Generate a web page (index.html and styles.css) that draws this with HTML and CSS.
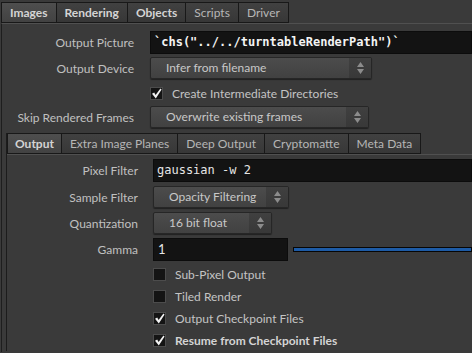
FILE: index.html
```html
<!DOCTYPE html>
<html>
<head>
<title>Render Parameters</title>
<link rel="stylesheet" href="styles.css">
</head>
<body>
<div class="tabs">
<div class="tab active bold">Images</div>
<div class="tab bold">Rendering</div>
<div class="tab bold">Objects</div>
<div class="tab">Scripts</div>
<div class="tab">Driver</div>
</div>
<div class="panel">
<div class="row tall">
<label class="lbl">Output Picture</label>
<div class="field mono strong">`chs("../../turntableRenderPath")`</div>
</div>
<div class="row">
<label class="lbl">Output Device</label>
<div class="menu w222"><span class="menu_text">Infer from filename</span><span class="menu_arrow"><svg width="7" height="12" viewBox="0 0 7 12"><path d="M0 5 L3.5 0 L7 5 Z M0 7 L7 7 L3.5 12 Z" fill="#8c8c8c"/></svg></span></div>
</div>
<div class="row check_row">
<span class="lbl"></span>
<span class="box"><svg width="11" height="11" viewBox="0 0 11 11"><path d="M1 5.8 L3.2 4.6 L4.6 7 L9.4 0.6 L10.6 1.6 L4.8 10.4 Z" fill="#f2f2f2"/></svg></span>
<span class="check_text">Create Intermediate Directories</span>
</div>
<div class="row skip_row">
<label class="lbl">Skip Rendered Frames</label>
<div class="menu w219"><span class="menu_text">Overwrite existing frames</span><span class="menu_arrow"><svg width="7" height="12" viewBox="0 0 7 12"><path d="M0 5 L3.5 0 L7 5 Z M0 7 L7 7 L3.5 12 Z" fill="#8c8c8c"/></svg></span></div>
</div>

<div class="subwrap">
<div class="tabs sub">
<div class="tab active bold">Output</div>
<div class="tab">Extra Image Planes</div>
<div class="tab">Deep Output</div>
<div class="tab">Cryptomatte</div>
<div class="tab">Meta Data</div>
</div>
<div class="subpanel">
<div class="row tall">
<label class="lbl">Pixel Filter</label>
<div class="field mono">gaussian -w 2</div>
</div>
<div class="row">
<label class="lbl">Sample Filter</label>
<div class="menu w136"><span class="menu_text">Opacity Filtering</span><span class="menu_arrow"><svg width="7" height="12" viewBox="0 0 7 12"><path d="M0 5 L3.5 0 L7 5 Z M0 7 L7 7 L3.5 12 Z" fill="#8c8c8c"/></svg></span></div>
</div>
<div class="row">
<label class="lbl">Quantization</label>
<div class="menu w119"><span class="menu_text">16 bit float</span><span class="menu_arrow"><svg width="7" height="12" viewBox="0 0 7 12"><path d="M0 5 L3.5 0 L7 5 Z M0 7 L7 7 L3.5 12 Z" fill="#8c8c8c"/></svg></span></div>
</div>
<div class="row tall">
<label class="lbl">Gamma</label>
<div class="field w135">1</div>
<div class="slider"></div>
</div>
<div class="row check_row first_check">
<span class="lbl"></span>
<span class="box"></span>
<span class="check_text">Sub-Pixel Output</span>
</div>
<div class="row check_row">
<span class="lbl"></span>
<span class="box"></span>
<span class="check_text">Tiled Render</span>
</div>
<div class="row check_row">
<span class="lbl"></span>
<span class="box"><svg width="11" height="11" viewBox="0 0 11 11"><path d="M1 5.8 L3.2 4.6 L4.6 7 L9.4 0.6 L10.6 1.6 L4.8 10.4 Z" fill="#f2f2f2"/></svg></span>
<span class="check_text">Output Checkpoint Files</span>
</div>
<div class="row check_row">
<span class="lbl"></span>
<span class="box"><svg width="11" height="11" viewBox="0 0 11 11"><path d="M1 5.8 L3.2 4.6 L4.6 7 L9.4 0.6 L10.6 1.6 L4.8 10.4 Z" fill="#f2f2f2"/></svg></span>
<span class="check_text bold">Resume from Checkpoint Files</span>
</div>
</div>
</div>
</div>
</body>
</html>
```

FILE: styles.css
```css
*{
  box-sizing: border-box;
}
html, body {
  margin: 0;
  height: 100%;
  overflow: hidden;
}
body {
  background-color: #3a3a3a;
  font-family: Lato, "Noto Sans", sans-serif;
  font-size: 12px;
  color: #c4c4c4;
}
.bold {
  font-weight: bold;
}
.tabs {
  display: flex;
  padding: 2px 0 0 1px;
  height: 23px;
}
.tabs .tab {
  height: 21px;
  line-height: 19px;
  padding: 0 8px;
  border: 1px solid #181818;
  margin-right: -1px;
  background: linear-gradient(#414141, #373737);
  color: #b6b6b6;
  white-space: nowrap;
}
.tabs .tab.bold {
  color: #d4d4d4;
}
.tabs.sub .tab.bold {
  padding: 0 7px;
}
.tabs .tab.active {
  background: linear-gradient(#4e4e4e, #424242);
}
.panel {
  margin-left: 1px;
  border-left: 1px solid #1e1e1e;
  border-top: 1px solid #505050;
  padding-top: 7px;
  height: 329px;
}
.row {
  display: flex;
  align-items: center;
  height: 22px;
  margin-top: 3px;
  white-space: nowrap;
}
.row.tall {
  height: 23px;
  margin-top: 0;
}
.row.skip_row {
  margin-top: 2px;
}
.lbl {
  width: 132px;
  flex: none;
  margin-right: 16px;
  text-align: right;
  color: #c0c0c0;
}
.field {
  flex: 1;
  height: 100%;
  background-color: #131313;
  border: 1px solid #0c0c0c;
  padding: 0 3px;
  line-height: 21px;
  color: #e6e6e6;
  overflow: hidden;
}
.mono {
  font-family: "DejaVu Sans Mono", monospace;
  font-size: 12px;
}
.strong {
  font-weight: bold;
  color: #f4f4f4;
}
.menu {
  display: flex;
  height: 22px;
  border: 1px solid #262626;
  border-radius: 2px;
  background: linear-gradient(#4c4c4c, #414141);
  box-shadow: 0 1px 1px rgba(0,0,0,0.45);
  color: #c8c8c8;
}
.menu_text {
  flex: 1;
  padding-left: 15px;
  line-height: 20px;
}
.menu_arrow {
  width: 22px;
  display: flex;
  align-items: center;
  justify-content: center;
  background: linear-gradient(#404040, #383838);
}
.w222 { width: 222px; }
.w219 { width: 219px; }
.w136 { width: 136px; }
.w119 { width: 119px; }
.w135 { width: 135px; flex: none; padding-left: 4px; font-size: 13px; }
.box {
  width: 13px;
  height: 13px;
  flex: none;
  background-color: #141414;
  border: 1px solid #4c4c4c;
  display: flex;
  align-items: center;
  justify-content: center;
}
.check_text {
  margin-left: 9px;
  color: #c4c4c4;
}
.check_text.bold {
  color: #d4d4d4;
}
.subwrap {
  margin-left: 4px;
  margin-top: 5px;
  border-left: 1px solid #1c1c1c;
}
.tabs.sub {
  padding: 0;
  height: 21px;
}
.subpanel {
  border-top: 1px solid #505050;
  padding-top: 4px;
}
.subpanel .lbl {
  width: 131px;
  margin-right: 15px;
}
.subpanel .row {
  margin-top: 4px;
}
.subpanel .row.tall {
  margin-top: 4px;
}
.subpanel .row:first-child {
  margin-top: 0;
}
.subpanel .check_row {
  margin-top: 0;
}
.subpanel .first_check {
  margin-top: 2px;
}
.slider {
  flex: 1;
  height: 5px;
  margin-left: 5px;
  background-color: #1d5ba6;
  border: 1px solid #060606;
}
```
